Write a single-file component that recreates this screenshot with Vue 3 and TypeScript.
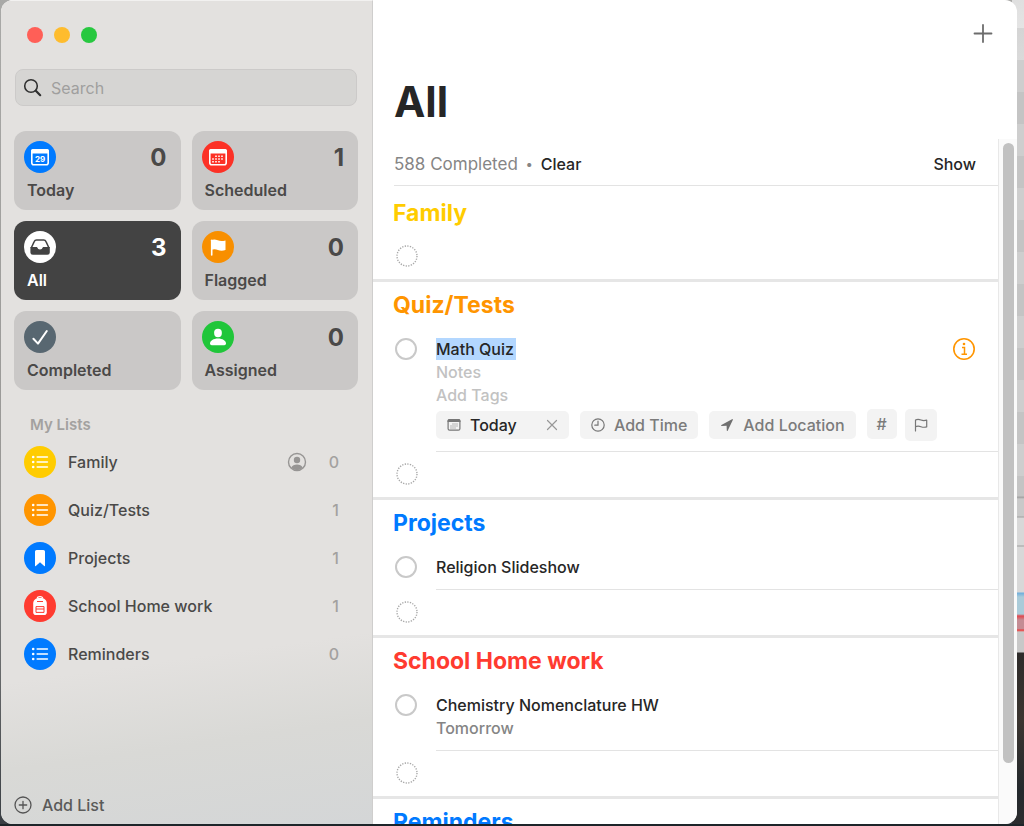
<script setup lang="ts">
import { ref } from 'vue'

type SmartIcon = 'today' | 'calendar' | 'tray' | 'flag' | 'check' | 'person'
type ListIcon = 'list' | 'bookmark' | 'backpack'

interface SmartList {
  name: string
  icon: SmartIcon
  tone: string
  count?: number
}

interface UserList {
  name: string
  icon: ListIcon
  tone: string
  count: number
  shared?: boolean
}

interface Reminder {
  id: string
  title: string
  due?: string
  editing?: boolean
}

interface Section {
  name: string
  tone: string
  items: Reminder[]
}

const query = ref('')
const active = ref('All')
const editedTitle = ref('Math Quiz')
const notes = ref('')
const tags = ref('')

const smartLists: SmartList[] = [
  { name: 'Today', icon: 'today', tone: 'blue', count: 0 },
  { name: 'Scheduled', icon: 'calendar', tone: 'scarlet', count: 1 },
  { name: 'All', icon: 'tray', tone: 'white', count: 3 },
  { name: 'Flagged', icon: 'flag', tone: 'amber', count: 0 },
  { name: 'Completed', icon: 'check', tone: 'slate' },
  { name: 'Assigned', icon: 'person', tone: 'green', count: 0 },
]

const userLists: UserList[] = [
  { name: 'Family', icon: 'list', tone: 'yellow', count: 0, shared: true },
  { name: 'Quiz/Tests', icon: 'list', tone: 'orange', count: 1 },
  { name: 'Projects', icon: 'bookmark', tone: 'blue', count: 1 },
  { name: 'School Home work', icon: 'backpack', tone: 'red', count: 1 },
  { name: 'Reminders', icon: 'list', tone: 'blue', count: 0 },
]

const sections: Section[] = [
  { name: 'Family', tone: 'yellow', items: [] },
  { name: 'Quiz/Tests', tone: 'orange', items: [{ id: 'quiz', title: 'Math Quiz', editing: true }] },
  { name: 'Projects', tone: 'blue', items: [{ id: 'slides', title: 'Religion Slideshow' }] },
  { name: 'School Home work', tone: 'red', items: [{ id: 'chem', title: 'Chemistry Nomenclature HW', due: 'Tomorrow' }] },
  { name: 'Reminders', tone: 'blue', items: [] },
]
</script>

<template>
  <div class="desktop">
    <div class="window">
      <aside class="sidebar">
        <div class="lights">
          <button class="light close" type="button" aria-label="Close"></button>
          <button class="light minimise" type="button" aria-label="Minimise"></button>
          <button class="light zoom" type="button" aria-label="Zoom"></button>
        </div>

        <label class="search">
          <svg width="20" height="20" viewBox="0 0 20 20" fill="none" stroke="#303030" stroke-linecap="round" aria-hidden="true">
            <circle cx="8" cy="8" r="6.3" stroke-width="1.6" />
            <path d="M12.8 12.8 17.2 17.2" stroke-width="2.2" />
          </svg>
          <input v-model="query" type="text" placeholder="Search" aria-label="Search" />
        </label>

        <nav class="cards" aria-label="Smart lists">
          <button
            v-for="card in smartLists"
            :key="card.name"
            type="button"
            class="card"
            :class="{ active: active === card.name }"
            @click="active = card.name"
          >
            <span class="card-top">
              <span class="badge" :class="`bg-${card.tone}`">
                <svg v-if="card.icon === 'today'" width="32" height="32" viewBox="0 0 32 32" aria-hidden="true">
                  <rect x="7.8" y="8.8" width="16.4" height="15" rx="2" fill="none" stroke="#fff" stroke-width="1.6" />
                  <path d="M7 10a2 2 0 0 1 2-2h14a2 2 0 0 1 2 2v2.6H7z" fill="#fff" />
                  <text x="16" y="20.8" class="day">29</text>
                </svg>
                <svg v-else-if="card.icon === 'calendar'" width="32" height="32" viewBox="0 0 32 32" aria-hidden="true">
                  <rect x="7.8" y="8.8" width="16.4" height="15" rx="2" fill="none" stroke="#fff" stroke-width="1.6" />
                  <path d="M7 10a2 2 0 0 1 2-2h14a2 2 0 0 1 2 2v2.6H7z" fill="#fff" />
                  <path d="M13.2 15.2h8.6M10.2 18h11.6M10.2 20.8h8.6" stroke="#fff" stroke-width="1.6" stroke-dasharray="1.6 1.4" />
                </svg>
                <svg v-else-if="card.icon === 'tray'" width="32" height="32" viewBox="0 0 32 32" aria-hidden="true">
                  <path d="M7.200 17 10.200 10.600Q10.900 9 12.500 9h7.200q1.600 0 2.300 1.600L25 17" fill="none" stroke="#434343" stroke-width="1.500" stroke-linejoin="round" />
                  <path d="M6.400 16h6.400q.4 0 .5.5a2.800 2.800 0 0 0 5.400 0q.1-.5.5-.5h6.600v5.400q0 2.400-2.400 2.400H8.800q-2.400 0-2.400-2.400z" fill="#434343" />
                </svg>
                <svg v-else-if="card.icon === 'flag'" width="32" height="32" viewBox="0 0 32 32" aria-hidden="true">
                  <path d="M9.700 24V9.300" stroke="#fff" stroke-width="1.600" stroke-linecap="round" />
                  <path d="M9.200 9.200c2.200-1 4.300-.9 6.500.1s4.500 1.100 7.800.2v9.500c-3.300 1-5.500.7-7.600-.1-2.200-.9-4.200-.9-6.700-.1z" fill="#fff" />
                </svg>
                <svg v-else-if="card.icon === 'check'" width="32" height="32" viewBox="0 0 32 32" aria-hidden="true">
                  <path d="M9.400 17.800 14 22.600 22.800 10" fill="none" stroke="#fff" stroke-width="2" stroke-linecap="round" stroke-linejoin="round" />
                </svg>
                <svg v-else width="32" height="32" viewBox="0 0 32 32" fill="#fff" aria-hidden="true">
                  <ellipse cx="16" cy="12" rx="3.900" ry="4.200" />
                  <path d="M8 22.600c0-2.800 3.500-5 8-5s8 2.200 8 5q0 1.600-1.700 1.600H9.700Q8 24.200 8 22.600z" />
                </svg>
              </span>
              <span v-if="card.count !== undefined" class="card-count">{{ card.count }}</span>
            </span>
            <span class="card-name">{{ card.name }}</span>
          </button>
        </nav>

        <h2 class="group">My Lists</h2>
        <ul class="lists">
          <li v-for="list in userLists" :key="list.name">
            <button type="button" class="list-row">
              <span class="badge" :class="`bg-${list.tone}`">
                <svg v-if="list.icon === 'list'" width="32" height="32" viewBox="0 0 32 32" aria-hidden="true">
                  <path d="M13.200 11h10.200M13.200 16h10.200M13.200 21h10.200" stroke="#fff" stroke-width="1.600" stroke-linecap="round" />
                  <g fill="#fff">
                    <circle cx="9.200" cy="11" r="1.300" />
                    <circle cx="9.200" cy="16" r="1.300" />
                    <circle cx="9.200" cy="21" r="1.300" />
                  </g>
                </svg>
                <svg v-else-if="list.icon === 'bookmark'" width="32" height="32" viewBox="0 0 32 32" aria-hidden="true">
                  <path d="M11 9.600q0-1.600 1.600-1.600h6.800q1.600 0 1.600 1.600v14q0 .9-.8.300L16 20.300l-4.200 3.600q-.8.600-.8-.3z" fill="#fff" />
                </svg>
                <svg v-else width="32" height="32" viewBox="0 0 32 32" aria-hidden="true">
                  <path d="M13.300 8.600q0-2 2.700-2t2.700 2" fill="none" stroke="#fff" stroke-width="1.200" />
                  <path d="M9.200 13.500C9.200 10 11.500 8 16 8s6.800 2 6.800 5.500v8.700q0 2.800-2.800 2.800h-8q-2.800 0-2.800-2.800z" fill="#fff" />
                  <path d="M13 11.500h6M12 16.600h8v5.800h-8zM12 19h8" fill="none" stroke="#ff3b30" stroke-width="1" />
                </svg>
              </span>
              <span class="list-name">{{ list.name }}</span>
              <svg v-if="list.shared" class="shared" width="20" height="20" viewBox="0 0 20 20" role="img" aria-label="Shared">
                <circle cx="10" cy="10" r="8.500" fill="none" stroke="#979594" stroke-width="1.400" />
                <circle cx="10" cy="8" r="3.200" fill="#979594" />
                <path d="M4.200 15.800c1-2.300 3.200-3.300 5.800-3.300s4.800 1 5.800 3.300A8.300 8.300 0 0 1 10 18.300a8.300 8.300 0 0 1-5.800-2.500z" fill="#979594" />
              </svg>
              <span class="list-count">{{ list.count }}</span>
            </button>
          </li>
        </ul>

        <button type="button" class="add-list">
          <svg width="18" height="18" viewBox="0 0 18 18" fill="none" stroke="#555" stroke-width="1.300" stroke-linecap="round" aria-hidden="true">
            <circle cx="9" cy="9" r="8" />
            <path d="M9 5.300v7.400M5.300 9h7.400" />
          </svg>
          Add List
        </button>
      </aside>

      <main class="content">
        <header class="titlebar">
          <button type="button" class="add" aria-label="New reminder">
            <svg width="20" height="20" viewBox="0 0 20 20" stroke="#6c6c6c" stroke-width="1.800" stroke-linecap="round" aria-hidden="true">
              <path d="M10 2v17M1.500 10.500h17" />
            </svg>
          </button>
        </header>
        <h1>All</h1>

        <div class="scroller">
          <div class="page">
            <div class="summary">
              <span class="completed">588 Completed</span>
              <span class="dot">•</span>
              <button type="button" class="plain">Clear</button>
              <button type="button" class="plain show">Show</button>
            </div>

            <section v-for="section in sections" :key="section.name" class="section">
              <h2 :class="`fg-${section.tone}`">{{ section.name }}</h2>

              <div v-for="item in section.items" :key="item.id" class="item">
                <input type="checkbox" class="tick" :aria-label="`Complete ${item.title}`" />
                <div v-if="item.editing" class="body editing">
                  <div class="title-line">
                    <input v-model="editedTitle" type="text" class="field title-field" aria-label="Title" />
                    <button type="button" class="info" aria-label="Details">
                      <svg width="24" height="24" viewBox="0 0 24 24" fill="none" stroke="#ff9500" aria-hidden="true">
                        <circle cx="12" cy="12" r="10.200" stroke-width="1.600" />
                        <path d="M10 10.500h2.500V17M9.500 17.200h5.500" stroke-width="1.500" />
                        <circle cx="12" cy="7" r="1.300" fill="#ff9500" stroke="none" />
                      </svg>
                    </button>
                  </div>
                  <input v-model="notes" type="text" class="field" placeholder="Notes" aria-label="Notes" />
                  <input v-model="tags" type="text" class="field" placeholder="Add Tags" aria-label="Tags" />
                  <div class="chips">
                    <div class="chip date">
                      <button type="button" class="chip-main">
                        <svg width="14" height="14" viewBox="0 0 14 14" aria-hidden="true">
                          <rect x="1.100" y="1.600" width="11.800" height="10.600" rx="1.500" fill="none" stroke="#777" stroke-width="1.200" />
                          <path d="M.5 3a2 2 0 0 1 2-2h9a2 2 0 0 1 2 2v1H.500z" fill="#777" />
                          <path d="M5.500 6h5.500M3.500 8h7.500M3.500 10h5.500" stroke="#777" stroke-width="1" stroke-dasharray="1 1" />
                        </svg>
                        Today
                      </button>
                      <button type="button" class="clear" aria-label="Remove date">
                        <svg width="12" height="12" viewBox="0 0 12 12" stroke="#979797" stroke-width="1.200" stroke-linecap="round" aria-hidden="true">
                          <path d="M1.500 1.500 10.500 10.500M10.500 1.500 1.500 10.500" />
                        </svg>
                      </button>
                    </div>
                    <button type="button" class="chip">
                      <svg width="14" height="14" viewBox="0 0 14 14" fill="none" stroke="#777" stroke-width="1.200" stroke-linecap="round" aria-hidden="true">
                        <circle cx="7" cy="7" r="6.200" />
                        <path d="M7 3.200V7.200H3.800" />
                      </svg>
                      Add Time
                    </button>
                    <button type="button" class="chip">
                      <svg width="14" height="14" viewBox="0 0 14 14" aria-hidden="true">
                        <path d="M1.400 7 12 1.200q1.200-.4.800.8L7.800 12.600q-.8 1.100-1-.2l-.2-4.600-4.900.1q-1.300-.1-.3-.9z" fill="#707070" />
                      </svg>
                      Add Location
                    </button>
                    <div class="squares">
                      <button type="button" class="chip square" aria-label="Add tag">#</button>
                      <button type="button" class="chip square large" aria-label="Flag">
                        <svg width="14" height="14" viewBox="0 0 14 14" fill="none" stroke="#777" stroke-width="1.200" stroke-linecap="round" stroke-linejoin="round" aria-hidden="true">
                          <path d="M1.500 13V2c2-1.100 3.600-.8 5.500 0s3.500.7 5.700.2v6.700c-2.200.6-3.800.5-5.700-.2s-3.500-.8-5.500-.1" />
                        </svg>
                      </button>
                    </div>
                  </div>
                </div>
                <div v-else class="body">
                  <span class="title">{{ item.title }}</span>
                  <span v-if="item.due" class="due">{{ item.due }}</span>
                </div>
              </div>

              <button type="button" class="blank" :aria-label="`Add to ${section.name}`">
                <svg width="22" height="22" viewBox="0 0 22 22" fill="none" stroke="#a8a8a8" aria-hidden="true">
                  <circle cx="11" cy="11" r="10" stroke-width="1.400" stroke-dasharray="1.300 1.318" />
                </svg>
              </button>
            </section>
          </div>
          <div class="track"><div class="thumb"></div></div>
        </div>
      </main>
    </div>
  </div>
</template>

<style>
body {
  margin: 0;
  overflow: hidden;
}
</style>

<style scoped>
.desktop {
  box-sizing: border-box;
  height: 100vh;
  padding: 0 7px 2px 1px;
  background:
    linear-gradient(#1d2529, #1d2529) bottom / 100% 2px no-repeat,
    linear-gradient(#dfdfdf 0, #e4e4e4 28px, #d4d4d4 28px, #dadada 60px, transparent 60px) right top / 12px 60px no-repeat,
    repeating-linear-gradient(#cecece 0, #cecece 28px, #c4c4c4 28px, #c4c4c4 60px, #cecece 60px, #cecece 64px) right top / 12px 496px no-repeat,
    linear-gradient(#cccccc 496px, #9c9c9c 497px, #c9c9c9 499px, #c9c9c9 516px, #a0a0a0 517px, #d8d8d8 518px, #d8d8d8 545px, #a0a0a0 546px, #d8d8d8 547px, #d8d8d8 592px, #6faedc 593px, #aacbd9 597px, #aacbd9 614px, #e2454c 616px, #c48c94 620px, #c48c94 629px, #f03030 630px, #c8c8c8 632px, #c8c8c8 652px, #2d2b2a 653px, #3b3530 720px, #24292d 790px, #2b2c2e 824px) right / 12px 100% no-repeat,
    linear-gradient(#a9a9a7 0, #979694 62%, #383d42 100%);
  font-family: Inter, "Liberation Sans", sans-serif;
  font-size: 16px;
  color: #262626;
}

button,
input {
  margin: 0;
  padding: 0;
  border: 0;
  background: none;
  font: inherit;
  color: inherit;
  outline: none;
}

svg {
  display: block;
  flex: none;
}

.window {
  display: flex;
  height: 100%;
  border-radius: 12px;
  overflow: hidden;
  background: #fff;
}

.sidebar {
  box-sizing: border-box;
  display: flex;
  flex-direction: column;
  flex: 0 0 372px;
  padding: 26px 14px 10px 13px;
  border-right: 1px solid #cfcecd;
  border-top: 1px solid #f2f1f0;
  background: linear-gradient(172deg, #e3e1df 0, #e3e1df 78%, #d9d9d6 88%, #d4d6d7 100%);
}

.lights {
  display: flex;
  gap: 11px;
  padding-left: 13px;
}

.light {
  width: 16px;
  height: 16px;
  border-radius: 50%;
}

.close { background: #ff5f57; }
.minimise { background: #febc2e; }
.zoom { background: #28c840; }

.search {
  box-sizing: border-box;
  display: flex;
  align-items: center;
  gap: 8px;
  height: 37px;
  margin: 26px 1px 0;
  padding: 0 7px;
  border: 1px solid #cccac9;
  border-radius: 8px;
  background: #d6d5d3;
}

.search input {
  flex: 1;
  min-width: 0;
}

.search input::placeholder {
  color: #a09f9e;
  opacity: 1;
}

.cards {
  display: grid;
  grid-template-columns: 1fr 1fr;
  gap: 11px;
  margin-top: 25px;
}

.card {
  display: flex;
  flex-direction: column;
  height: 79px;
  padding: 10px 14px 0 10px;
  border-radius: 12px;
  background: #cac8c7;
  color: #4a4948;
  text-align: left;
}

.card.active {
  background: #434343;
  color: #fff;
}

.card-top {
  display: flex;
  align-items: center;
  justify-content: space-between;
  width: 100%;
  height: 32px;
}

.card-count {
  font-size: 24px;
  font-weight: 700;
  line-height: 32px;
  padding-top: 2px;
}

.card-name {
  padding: 6px 0 0 3px;
  font-weight: 600;
  line-height: 22px;
}

.badge {
  flex: none;
  width: 32px;
  height: 32px;
  border-radius: 50%;
}

.day {
  fill: #fff;
  font-size: 8px;
  font-weight: 700;
  text-anchor: middle;
}

.bg-blue { background: #007aff; }
.bg-scarlet { background: #fc3126; }
.bg-white { background: #fff; }
.bg-amber { background: #f88f00; }
.bg-slate { background: #586771; }
.bg-green { background: #20c63a; }
.bg-yellow { background: #ffcc00; }
.bg-orange { background: #ff9500; }
.bg-red { background: #ff3b30; }
.fg-yellow { color: #ffcc00; }
.fg-orange { color: #ff9500; }
.fg-blue { color: #007aff; }
.fg-red { color: #ff3b30; }

.group {
  margin: 25px 0 0 16px;
  font-size: 15px;
  font-weight: 600;
  line-height: 20px;
  color: #a3a1a0;
}

.lists {
  margin: 3px 0 0;
  padding: 0;
  list-style: none;
}

.list-row {
  display: flex;
  align-items: center;
  width: 100%;
  height: 48px;
  padding: 0 19px 0 10px;
  text-align: left;
  font-weight: 500;
  color: #4a4948;
}

.list-name {
  flex: 1;
  padding-left: 12px;
}

.list-count {
  width: 32px;
  text-align: right;
  color: #a3a1a0;
}

.add-list {
  display: flex;
  align-items: center;
  align-self: flex-start;
  gap: 10px;
  margin-top: auto;
  font-weight: 500;
  color: #5a5a59;
  line-height: 18px;
}

.content {
  display: flex;
  flex-direction: column;
  flex: 1;
  min-width: 0;
}

.titlebar {
  display: flex;
  justify-content: flex-end;
  padding: 23px 24px 0;
}

h1 {
  margin: 33px 0 11px 21px;
  font-size: 42px;
  font-weight: 700;
  line-height: 52px;
}

.scroller {
  display: flex;
  flex: 1;
  min-height: 0;
}

.page {
  flex: 1;
  min-width: 0;
  overflow: hidden;
  font-weight: 500;
}

.track {
  box-sizing: border-box;
  width: 19px;
  padding: 4px 3px 0 4px;
  border-left: 1px solid #e8e8e8;
  background: #fafafa;
}

.thumb {
  height: 91%;
  border-radius: 6px;
  background: #c1c1c1;
}

.summary {
  box-sizing: border-box;
  display: flex;
  align-items: center;
  gap: 8px;
  height: 47px;
  margin-left: 21px;
  padding: 3px 22px 0 0;
  border-bottom: 1px solid #e3e3e3;
  color: #858585;
}

.completed {
  font-size: 17px;
  font-weight: 400;
}

.dot {
  font-size: 13px;
}

.plain {
  color: #262626;
}

.show {
  margin-left: auto;
}

.section + .section {
  border-top: 3px solid #e6e6e6;
}

.section:first-of-type {
  padding-top: 4px;
}

.section h2 {
  height: 44px;
  margin: 0 0 0 20px;
  font-size: 23px;
  font-weight: 700;
  line-height: 46px;
}

.item {
  display: flex;
  padding-left: 22px;
}

.tick {
  appearance: none;
  box-sizing: border-box;
  flex: none;
  width: 22px;
  height: 22px;
  margin-top: 12px;
  border: 2px solid #c9c9c9;
  border-radius: 50%;
}

.body {
  display: flex;
  flex-direction: column;
  flex: 1;
  min-width: 0;
  margin-left: 19px;
  padding: 11px 0;
  border-bottom: 1px solid #e3e3e3;
  line-height: 24px;
}

.title,
.due {
  height: 23px;
}

.editing {
  padding-bottom: 12px;
}

.due {
  color: #858585;
}

.title-line {
  display: flex;
  justify-content: space-between;
  align-items: center;
  height: 23px;
  padding-right: 22px;
}

.field {
  height: 23px;
}

.field::placeholder {
  color: #c2c2c2;
  opacity: 1;
}

.title-field {
  field-sizing: content;
  height: 22px;
  padding-right: 2px;
  background: #b3d7ff;
}

.chips {
  display: flex;
  align-items: center;
  gap: 11px;
  height: 28px;
  margin-top: 5px;
}

.squares {
  display: flex;
  gap: 8px;
  height: 32px;
}

.chip {
  display: flex;
  align-items: center;
  gap: 9px;
  height: 28px;
  padding: 0 11px;
  border-radius: 5px;
  background: #f3f3f3;
  color: #7b7b7b;
  white-space: nowrap;
}

.date {
  box-sizing: border-box;
  width: 133px;
  justify-content: space-between;
}

.chip-main {
  display: flex;
  align-items: center;
  gap: 9px;
  color: #262626;
}

.square {
  width: 30px;
  height: 30px;
  padding: 0;
  justify-content: center;
}

.large {
  width: 32px;
  height: 32px;
}

.blank {
  display: block;
  width: 100%;
  height: 45px;
  padding: 0 0 1px 23px;
}
</style>
